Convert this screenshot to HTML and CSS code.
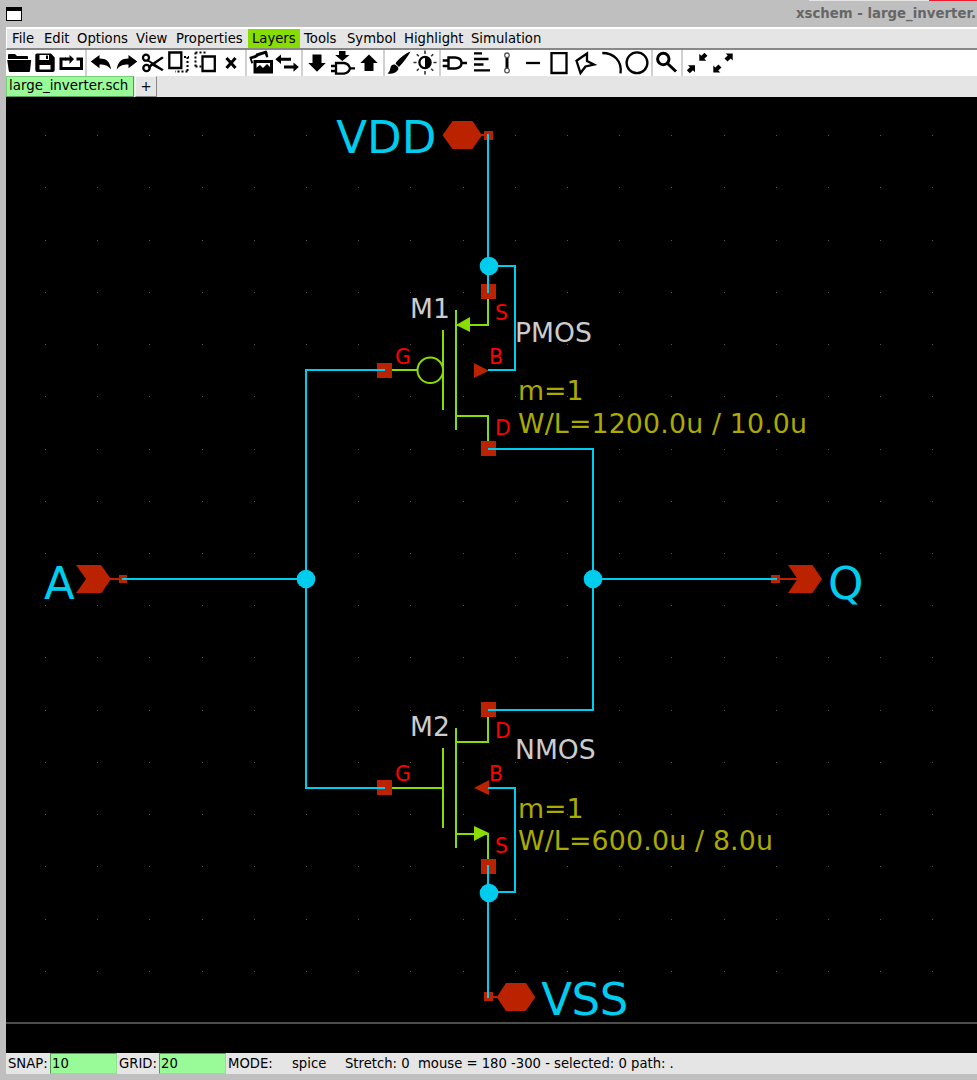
FILE: index.html
```html
<!DOCTYPE html>
<html lang="en">
<head>
<meta charset="utf-8">
<title>xschem - large_inverter.sch</title>
<link rel="stylesheet" href="styles.css">
</head>
<body>
<div class="window">
  <div class="behind"><span class="behind-light"></span><span class="behind-red"></span></div>
  <header class="titlebar"><span class="winicon"></span><span class="title">xschem - large_inverter.</span></header>
  <div class="client">
    <nav class="menubar">
      <span>File</span><span>Edit</span><span>Options</span><span>View</span><span>Properties</span><span class="active">Layers</span><span>Tools</span><span>Symbol</span><span>Highlight</span><span>Simulation</span>
    </nav>
    <div class="toolbar">
      <div class="group">
        <svg width="27" height="26" viewBox="6 50 27 26"><path d="M8 59V55q0-1 1-1h6l2 2h10q1 0 1 1v2zM7.200 60h24L30 71q0 1-1 1H10q-1 0-1.200-1z"/></svg>
        <svg width="25" height="26" viewBox="33 50 25 26"><path fill-rule="evenodd" d="M37 53.500h14l3.700 4V70q0 2-2 2H37q-1.700 0-1.700-2V55q0-1.500 1.700-1.500zM39.500 55v5h9.500v-5zM39.500 65V69.500h11v-4.500z"/><path d="M46 55.500h2v3.500h-2z"/></svg>
        <svg width="27" height="26" viewBox="58 50 27 26"><path class="ln3" d="M66 59h-5v9.500h20.500V59h-5"/><path class="ln3" d="M65 59h6"/><path d="M69.500 55l4.500 4-4.500 5z"/></svg>
      </div>
      <div class="group">
        <svg width="27" height="26" viewBox="87 50 27 26"><path d="M90.700 61.500l8.800-6.500v3.500c7 0 10.500 3 11.500 11-3-4-6-5-11.500-5v3.700z"/></svg>
        <svg width="26" height="26" viewBox="114 50 26 26"><path d="M137.300 61.500l-8.800-6.500v3.500c-7 0-10.500 3-11.800 11 3-4 6-5 11.800-5v3.700z"/></svg>
        <svg width="26" height="26" viewBox="140 50 26 26"><circle class="ln2" cx="146" cy="57.700" r="3"/><circle class="ln2" cx="146.500" cy="68" r="3.200"/><path d="M148 59.500l5 3L162 56.500l1.800 1.500-8.500 6 8.500 5.500-1.800 1.600-9.500-5.300-3.500 3.200-1-2 3-3.500-4-2.500z"/></svg>
        <svg width="26" height="26" viewBox="166 50 26 26"><path class="ln2" d="M169.300 52.500h12V68h-12z"/><path class="dots" d="M184 57h5M187.500 57v15M187.500 71.500H175"/></svg>
        <svg width="28" height="26" viewBox="192 50 28 26"><path class="ln2" d="M202.500 56.500h12.300v14.500h-12.300z"/><path class="dots" d="M195.500 52.500H207M195.500 52.500V67M195.500 66.500h6"/></svg>
        <svg width="25" height="26" viewBox="220 50 25 26"><path class="ln3" d="M226.500 58l9 10M235.500 58l-9 10"/></svg>
      </div>
      <div class="group">
        <svg width="27" height="26" viewBox="247 50 27 26"><path class="ln3" d="M255 61.500h16.500v10.500H255z"/><path d="M256 71v-3l4-3 3 3 4-4 4 4v4h-15z"/><path d="M249.300 57l6-2 1-1.500 10-3 1 1.500 1 5-2 .5-1.500-3.500-6 2-3 2-4 1 1.500 4-2 .5z"/></svg>
        <svg width="27" height="26" viewBox="274 50 27 26"><path class="ln3" d="M279 59.200h12M284 67h12"/><path d="M281 54.500v9.500l-5.700-4.800zM293.500 62.500v9.200l5.300-4.600z"/></svg>
      </div>
      <div class="group">
        <svg width="27" height="26" viewBox="303 50 27 26"><path d="M312.500 54.500h9V63h4.200L317 71.700 308.300 63h4.200z"/></svg>
        <svg width="27" height="26" viewBox="330 50 27 26"><path d="M339 51h6.500v4h4l-7.200 6-7.200-6h4z"/><path class="ln2" d="M336 63h8q5 1 6 5.300-1 4.700-6 5.400h-8zM331 66h5M331 71h5M350 68.300h5"/></svg>
        <svg width="26" height="26" viewBox="357 50 26 26"><path d="M364.500 71h9v-8h4.200L369 54.500 360.300 63h4.200z"/></svg>
      </div>
      <div class="group">
        <svg width="27" height="26" viewBox="385 50 27 26"><path d="M410.600 51.500C406 53 398.500 58.500 395.500 63.500l3.500 3.500C403.500 62 408 56.500 410.600 51.500zM395 64.500c-2-.5-4 .5-4.500 3-.5 3-1 4.500-3 6 4 1 8.500-.5 10.500-3.500.5-1 .5-2 0-3z"/></svg>
        <svg width="27" height="26" viewBox="412 50 27 26"><circle class="ln2" cx="425" cy="62.500" r="5.600"/><path d="M425 57a5.500 5.500 0 0 1 0 11z"/><path class="ray" d="M425 50.500v3.500M425 71v3.500M413.500 62.500h3M433.500 62.500h3M416.800 54.300l2 2M431.200 68.700l2 2M433.200 54.300l-2 2M418.800 68.700l-2 2"/></svg>
      </div>
      <div class="group">
        <svg width="28" height="26" viewBox="441 50 28 26"><path class="ln3 thin" d="M448.500 57.500h7q6 .7 6 5.500t-6 5.500h-7zM442.700 60.500h5M442.700 66h5M461.500 63h5.500"/></svg>
        <svg width="26" height="26" viewBox="469 50 26 26"><path class="ln2" d="M474 53.300h8M474 59h14.500M474 64.500h9.500M474 70.300h16"/></svg>
        <svg width="25" height="26" viewBox="495 50 25 26"><path d="M505.500 57h3v12h-3z"/><circle class="ring" cx="507" cy="55.300" r="2.300"/><circle class="ring" cx="507" cy="70.500" r="2.300"/></svg>
        <svg width="26" height="26" viewBox="520 50 26 26"><path class="ln2" d="M526 63h14"/></svg>
        <svg width="26" height="26" viewBox="546 50 26 26"><path class="ln2" d="M551.500 53.200h15V73h-15z"/></svg>
        <svg width="27" height="26" viewBox="572 50 27 26"><path class="ln2" d="M576.500 60.800l10.500-7.300v7.500l7 3.500-8.500 2-5 6.500z"/></svg>
        <svg width="25" height="26" viewBox="599 50 25 26"><path class="ln2" d="M602.300 53c11.500 0 20 8 18.200 20.300"/></svg>
        <svg width="27" height="26" viewBox="624 50 27 26"><circle class="ln2" cx="637" cy="62.800" r="10.400"/></svg>
      </div>
      <div class="group">
        <svg width="28" height="26" viewBox="653 50 28 26"><circle class="ln3" cx="663.300" cy="59" r="5.700"/><path class="ln3" d="M667.500 63.500l8.500 8"/></svg>
      </div>
      <div class="group">
        <svg width="27" height="26" viewBox="683 50 27 26"><path d="M688 65.300h7v7l-2-2-3.200 3-3-3 3.200-3zM699.300 53.700v7h7l-2-2 3.200-3-3-3-3.200 3z"/></svg>
        <svg width="27" height="26" viewBox="710 50 27 26"><path d="M713.300 65.500v7h7l-2-2 3.200-3-3-3-3.200 3zM725.700 53.500h7v7l-2-2-3.200 3-3-3 3.200-3z"/></svg>
      </div>
    </div>
    <div class="tabs"><span class="tab">large_inverter.sch</span><span class="newtab">+</span></div>
    <svg class="canvas" width="971" height="956" viewBox="6 97 971 956">
      <g id="grid"></g>
      <path fill="#4d4d4d" d="M6 1022h971v2H6z"/>
      <g class="pin">
        <path d="M442.500 135.300L452.500 121h20l9.500 14.300-9.500 13.700h-20z"/><path d="M481 134h4v2h-4zM484 131h9v9h-9z"/>
        <path d="M496.700 997.300L506 983h20l9.300 14.300L525.700 1011H506z"/><path d="M492 996h5v2h-5zM484 992h9v9h-9z"/>
        <path d="M76 565h25l10 14-9.500 14H76l10-14z"/><path d="M110 578h10v2h-10zM119 575h8v8h-8z"/>
        <path d="M788 565h24.500L822 579l-9.500 14H788l9.500-14z"/><path d="M779 578h19v2h-19zM771 575h9v8h-9z"/>
        <path d="M481 284h15v15h-15zM377 363h15v15h-15zM481 441h15v15h-15zM481 702h15v15h-15zM377 780h15v15h-15zM481 859h15v15h-15z"/>
        <path d="M474 363l15 7.700-15 7.300zM489 780v15l-15-7z"/>
      </g>
      <g class="device">
        <path d="M488 299v26h-32M456 310v120M443 330v80M392 370h25M456 416h32v25"/><circle cx="430.300" cy="370.300" r="12.800"/>
        <path d="M488 717v25h-32M456 728v120M443 748v80M392 788h51M456 834h32v25"/>
        <path class="solid" d="M456 325l14-8v15zM474 826l15 7-15 8z"/>
      </g>
      <g class="wire">
        <path d="M488 134v159M488 266h27v104h-27M385 370h-79v418h79M122 579h184M488 449h105v261H488M593 579h184M488 788h27v104h-27M488 865v133"/>
        <g class="node"><circle cx="489" cy="266" r="9.300"/><circle cx="306" cy="579" r="9.300"/><circle cx="593" cy="579" r="9.300"/><circle cx="489" cy="893" r="9.300"/></g>
      </g>
      <g class="netname"><text x="336.300" y="153">VDD</text><text x="44" y="599">A</text><text x="828" y="599">Q</text><text x="541.300" y="1015" textLength="87">VSS</text></g>
      <g class="name"><text x="410" y="318">M1</text><text x="515" y="342">PMOS</text><text x="410" y="736">M2</text><text x="515" y="759">NMOS</text></g>
      <g class="value"><text x="518" y="400">m=1</text><text x="518" y="433" textLength="289">W/L=1200.0u / 10.0u</text><text x="518" y="818">m=1</text><text x="518" y="850" textLength="255">W/L=600.0u / 8.0u</text></g>
      <g class="pinname"><text x="495" y="320">S</text><text x="395" y="364">G</text><text x="489" y="364">B</text><text x="495" y="435">D</text><text x="495" y="738">D</text><text x="395" y="781">G</text><text x="489" y="781">B</text><text x="495" y="853">S</text></g>
    </svg>
    <footer class="status">
      <span>SNAP:</span><span class="entry">10</span><span class="lbl">GRID:</span><span class="entry">20</span><span class="lbl">MODE:</span><span>spice</span><span>Stretch: 0</span><span class="msg">mouse = 180 -300 - selected: 0 path: .</span>
    </footer>
  </div>
</div>
<script src="grid.js"></script>
</body>
</html>
```
FILE: styles.css
```css
body { margin: 0; }
.window {
  position: relative;
  width: 977px;
  height: 1080px;
  overflow: hidden;
  background: #bfbfbf;
  font: 13.2px/19px "DejaVu Sans", sans-serif;
  color: #000;
  white-space: nowrap;
}
.behind { position: absolute; top: 0; left: 809px; right: 0; display: flex; height: 1px; }
.behind-light { width: 120px; background: #e5e5e5; }
.behind-red { flex: 1; background: #ef1b30; }
.titlebar { display: flex; align-items: center; justify-content: space-between; height: 27px; padding-left: 6px; box-sizing: border-box; }
.winicon { width: 14px; height: 9px; border: 1px solid #000; border-top-width: 4px; background: #fff; margin-top: 1px; }
.title { width: 181px; color: #666; font-weight: bold; font-size: 13.3px; }
.client { margin-left: 6px; }
.menubar {
  display: grid;
  grid-template-columns: 32px 33px 59px 40px 76px 52px 43px 57px 67px 78px;
  height: 19px;
  padding-left: 1px;
  border-top: 2px solid #fff;
  border-bottom: 2px solid #888;
  border-left: 1px solid #fff;
  background: #e5e5e5;
}
.menubar span { padding-left: 4px; }
.menubar .active { background: #8d0; }
.toolbar { display: flex; height: 26px; background: #fff; }
.group { display: flex; border-right: 2px solid #d0d0d0; }
.group:last-child { border: 0; }
.toolbar svg { display: block; }
.ln2, .ln3, .dots, .ray, .ring { fill: none; stroke: #000; stroke-width: 2.3; }
.ln3 { stroke-width: 3; }
.thin { stroke-width: 2.4; }
.dots { stroke-width: 2; stroke-dasharray: 2 2; }
.ray { stroke: #333; stroke-width: 1.6; }
.ring { stroke: #555; stroke-width: 1.3; }
.tabs { display: flex; height: 21px; background: #e5e5e5; }
.tab { width: 124px; padding-left: 2px; height: 19px; line-height: 17px; font-size: 13.4px; background: #98fb98; border: 1px solid #7bcf7b; border-right-color: #5a9a5a; border-bottom-color: #5a9a5a; margin-right: 1px; }
.newtab { width: 20px; height: 19px; text-align: center; border: 1px solid #f4f4f4; border-right-color: #888; border-bottom-color: #888; }
.canvas { display: block; background: #000; }
.pin { fill: #b20; }
.device { fill: none; stroke: #8d0; stroke-width: 2; }
.device .solid { fill: #8d0; stroke: none; }
.wire { fill: none; stroke: #0ce; stroke-width: 2; }
.node { fill: #0ce; stroke: none; }
.netname { fill: #0ce; font-size: 45px; }
.name { fill: #ccc; font-size: 26.6px; }
.value { fill: #aa0; font-size: 26.8px; }
.pinname { fill: #f00; font-size: 20.4px; }
.status {
  display: grid;
  grid-template-columns: 42px 67px 42px 67px 66px 53px 73px 300px;
  padding-left: 2px;
  height: 21px;
  line-height: 21px;
  background: #e5e5e5;
}
.status .entry { box-sizing: border-box; height: 21px; line-height: 19px; background: #98fb98; border: 1px solid #5a9a5a; border-right-color: #8be48b; border-bottom-color: #8be48b; padding-left: 1px; }
.status .lbl { padding-left: 2px; }
```
FILE: grid.js
```javascript
const grid = document.getElementById('grid');
for (let row = 0; row < 17; row++) {
  for (let col = 0; col < 18; col++) {
    const dot = document.createElementNS('http://www.w3.org/2000/svg', 'rect');
    dot.setAttribute('x', Math.round(45 + 52.2 * col));
    dot.setAttribute('y', Math.round(135.2 + 52.22 * row));
    dot.setAttribute('width', 1);
    dot.setAttribute('height', 1);
    dot.setAttribute('fill', '#555');
    grid.appendChild(dot);
  }
}
```
